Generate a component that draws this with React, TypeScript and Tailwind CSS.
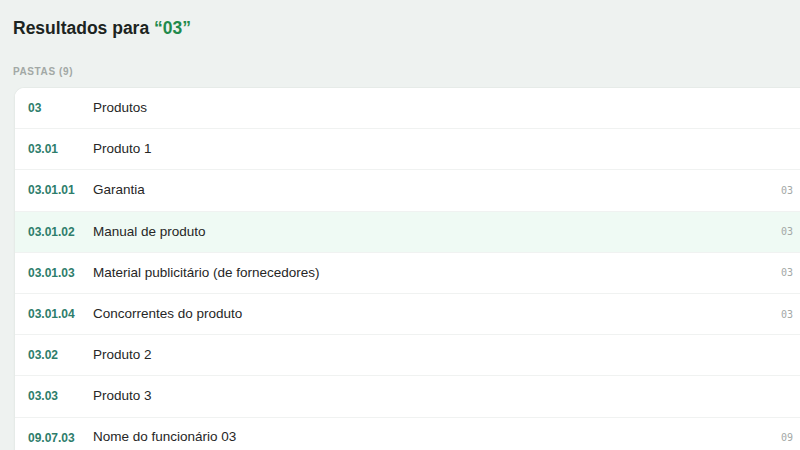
import React from 'react';

interface FolderRow {
  code: string;
  name: string;
  path?: string;
}

const FOLDERS: FolderRow[] = [
  { code: '03', name: 'Produtos' },
  { code: '03.01', name: 'Produto 1' },
  { code: '03.01.01', name: 'Garantia', path: '03 › 03.01' },
  { code: '03.01.02', name: 'Manual de produto', path: '03 › 03.01' },
  { code: '03.01.03', name: 'Material publicitário (de fornecedores)', path: '03 › 03.01' },
  { code: '03.01.04', name: 'Concorrentes do produto', path: '03 › 03.01' },
  { code: '03.02', name: 'Produto 2' },
  { code: '03.03', name: 'Produto 3' },
  { code: '09.07.03', name: 'Nome do funcionário 03', path: '09 › 09.07' },
];

const ACTIVE = '03.01.02';

const Row: React.FC<{ row: FolderRow }> = ({ row }) => {
  const active = row.code === ACTIVE;
  return (
    <div
      className={`flex items-center h-[41.2px] border-b border-[#f0f2f1] pl-[13px] ${active ? 'bg-[#effaf4]' : 'bg-white'}`}
    >
      <span className="w-[65px] shrink-0 text-[12px] font-bold text-[#2e7d6b]">{row.code}</span>
      <span className="flex-1 text-[13.5px] text-[#262626]">{row.name}</span>
      {row.path && (
        <span className="w-[63px] shrink-0 whitespace-nowrap font-['DejaVu_Sans_Mono',monospace] text-[10px] text-[#a3a8a6]">
          {row.path}
        </span>
      )}
    </div>
  );
};

export default function App() {
  return (
    <div className="h-[450px] w-[800px] overflow-hidden bg-[#eef2f0] font-['Liberation_Sans',Arial,sans-serif]">
      <div className="pl-[13px] pt-[16px]">
        <h1 className="text-[17.5px] font-bold leading-[24px] text-[#1c2421]">
          Resultados para <span className="text-[#1f8a4c]">“03”</span>
        </h1>
        <div className="mt-[24px] text-[10px] font-bold uppercase tracking-[0.06em] text-[#a2a8a5]">Pastas (9)</div>
      </div>
      <div className="ml-[14px] mt-[8px] w-[830px] overflow-hidden rounded-tl-[10px] border-l border-t border-[#e6ebe8] bg-white shadow-[0_1px_2px_rgba(0,0,0,0.04)]">
        {FOLDERS.map((row) => (
          <Row key={row.code} row={row} />
        ))}
      </div>
    </div>
  );
}
